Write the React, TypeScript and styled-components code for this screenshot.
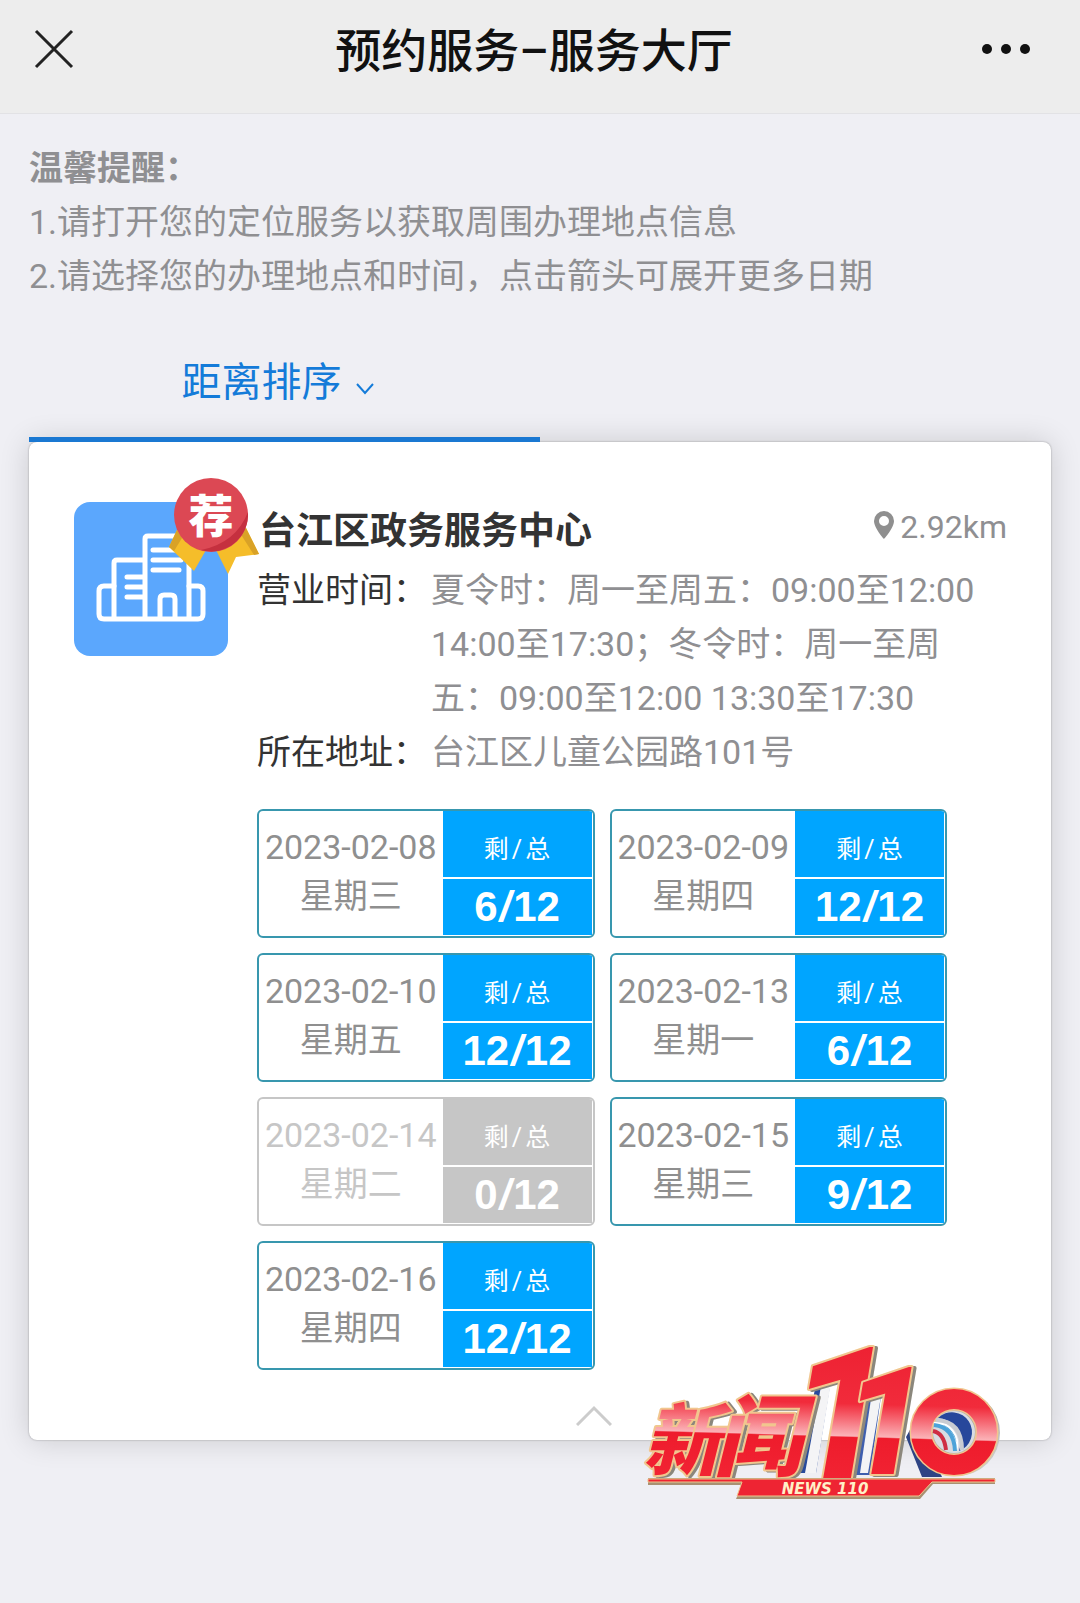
import React from "react";
import styled, { createGlobalStyle } from "styled-components";

const GlobalStyle = createGlobalStyle`
  * { box-sizing: border-box; }
  body {
    margin: 0;
    background: #efeff4;
    font-family: Roboto, "Noto Sans CJK SC", sans-serif;
    color: #8f8f92;
  }
  h1, h2, p, dl, dt, dd, ul { margin: 0; padding: 0; }
  button { font: inherit; color: inherit; background: none; border: 0; padding: 0; cursor: pointer; }
`;

const Page = styled.div`
  min-height: 100vh;
  padding-bottom: 162px;
`;

const Header = styled.header`
  display: grid;
  grid-template-columns: 1fr auto 1fr;
  align-items: center;
  padding: 0 46px 16px 34px;
  height: 114px;
  background: #ededed;
  border-bottom: 1px solid #e2e2e5;
`;

const HeaderTitle = styled.h1`
  padding-top: 4px;
  font-size: 46px;
  line-height: 60px;
  font-weight: 500;
  color: #111;
`;

const HeaderButton = styled.button<{ $side: "start" | "end" }>`
  justify-self: ${(p) => p.$side};
  display: flex;
`;

const Main = styled.main`
  padding: 27px 29px 0;
`;

const Notice = styled.section`
  font-size: 34px;
  line-height: 54px;
`;

const NoticeTitle = styled.h2`
  font-size: inherit;
  font-weight: 700;
`;

const SortBar = styled.nav`
  position: relative;
  z-index: 1;
  display: flex;
  padding-top: 19px;
`;

const SortTab = styled.button`
  display: flex;
  flex: 0 0 50%;
  align-items: center;
  justify-content: center;
  gap: 14px;
  height: 120px;
  padding: 6px 14px 0 0;
  border-bottom: 5px solid #1a78d2;
  color: #147bd9;
  font-size: 40px;
  line-height: 54px;

  svg { margin-top: 12px; }
`;

const Card = styled.article`
  position: relative;
  display: flex;
  align-items: flex-start;
  gap: 29px;
  padding: 60px 44px 0 45px;
  background: #fff;
  border-radius: 8px;
  box-shadow: 0 0 2px rgba(0, 0, 0, 0.35), 0 0 30px rgba(0, 0, 0, 0.16);
`;

const Tile = styled.div`
  position: relative;
  flex: none;
  display: flex;
  width: 154px;
  height: 154px;
  border-radius: 16px;
  background: #5ba7fd;
`;

const Ribbon = styled.svg`
  position: absolute;
  top: -26px;
  right: -32px;
`;

const Content = styled.div`
  flex: 1;
  min-width: 0;
`;

const TitleRow = styled.div`
  display: flex;
  align-items: flex-start;
  justify-content: space-between;
  margin-bottom: 1px;
`;

const CenterName = styled.h2`
  padding-left: 2px;
  font-size: 37px;
  line-height: 60px;
  font-weight: 700;
  color: #333;
`;

const Distance = styled.span`
  display: flex;
  align-items: center;
  gap: 6px;
  font-size: 32px;
  line-height: 50px;

  svg { margin-bottom: 4px; }
`;

const Details = styled.dl`
  display: grid;
  grid-template-columns: 174px 1fr;
  padding-right: 16px;
  font-size: 34px;
  line-height: 54px;
`;

const Term = styled.dt`
  color: #333;
`;

const Value = styled.dd``;

const Slots = styled.ul`
  display: grid;
  grid-template-columns: repeat(2, 1fr);
  gap: 15px;
  padding: 30px 60px 0 0;
  list-style: none;
`;

const SlotButton = styled.button`
  display: flex;
  width: 100%;
  height: 129px;
  border: 2px solid #3897ae;
  border-radius: 6px;
  overflow: hidden;
  background: #fff;
  color: #8f8f8f;

  &:disabled {
    border-color: #c6c6c6;
    color: #c6c6c6;
    cursor: default;
  }
`;

const SlotDate = styled.span`
  flex: 1;
  display: flex;
  flex-direction: column;
  justify-content: center;
  align-items: center;
  align-self: stretch;
  padding-bottom: 4px;
  font-size: 34px;
  line-height: 49px;
`;

const Quota = styled.span<{ $full: boolean }>`
  display: grid;
  grid-template-rows: 66px 56px;
  gap: 2px;
  flex: none;
  width: 149px;
  margin: 0 1px 1px 0;
  color: #fff;

  > span {
    display: flex;
    align-items: center;
    justify-content: center;
    background: ${(p) => (p.$full ? "#c6c6c6" : "#00a5ff")};
  }
`;

const QuotaLabel = styled.span`
  padding-top: 12px;
  font-size: 25px;
  line-height: 36px;
  i { font-style: normal; margin: 0 3px; }
`;

const QuotaCount = styled.span`
  font-family: "Liberation Sans", sans-serif;
  font-size: 42px;
  line-height: 54px;
  font-weight: 700;
  i { font-style: italic; margin: 0 2px; }
`;

const Collapse = styled.button`
  display: flex;
  justify-content: center;
  width: 100%;
  padding: 35px 76px 14px 0;
`;

const Logo = styled.svg`
  position: absolute;
  right: 21px;
  bottom: -79px;
  overflow: visible;
`;

const Raised = styled.g`
  filter: drop-shadow(3px 1px 0 #8b877c);
`;

interface Slot {
  date: string;
  day: string;
  left: number;
}

const TOTAL = 12;

const slots: Slot[] = [
  { date: "2023-02-08", day: "星期三", left: 6 },
  { date: "2023-02-09", day: "星期四", left: 12 },
  { date: "2023-02-10", day: "星期五", left: 12 },
  { date: "2023-02-13", day: "星期一", left: 6 },
  { date: "2023-02-14", day: "星期二", left: 0 },
  { date: "2023-02-15", day: "星期三", left: 9 },
  { date: "2023-02-16", day: "星期四", left: 12 },
];

function SlotItem({ date, day, left }: Slot) {
  return (
    <li>
      <SlotButton disabled={left === 0}>
        <SlotDate>
          <span>{date}</span>
          <span>{day}</span>
        </SlotDate>
        <Quota $full={left === 0}>
          <QuotaLabel>剩<i>/</i>总</QuotaLabel>
          <QuotaCount>{left}<i>/</i>{TOTAL}</QuotaCount>
        </Quota>
      </SlotButton>
    </li>
  );
}

function BuildingIcon() {
  return (
    <svg width="154" height="154" viewBox="0 0 154 154" fill="none" stroke="#fff" strokeWidth="5" strokeLinejoin="round" strokeLinecap="round">
      <path d="M40 84H30q-5 0-5 5v23q0 5 5 5h94q5 0 5-5V89q0-5-5-5h-9" />
      <path d="M40 116V61q0-3 3-3h26" />
      <path d="M71 116V37q0-3 3-3h38q3 0 3 3v79" />
      <path d="M79 48h28M79 58h28M79 68h26M53 75h16M53 85h16M53 95h16" />
      <path d="M86 116V97q0-4 4-4h7q4 0 4 4v19" />
    </svg>
  );
}

function RecommendBadge() {
  return (
    <Ribbon width="92" height="102" viewBox="0 0 92 102">
      <path d="M9 54L1 71L26 95L38 74L28 60Z" fill="#f5bd2a" />
      <path d="M9 54L1 71L6 75L14 62Z" fill="#d9a227" />
      <path d="M48 74L60 98L68 81L91 78L78 52Z" fill="#f5bd2a" />
      <path d="M78 52L91 78L86 79L72 57Z" fill="#d9a227" />
      <circle cx="43" cy="39" r="37" fill="#dc4854" />
      <path d="M33 74Q68 67 80 36A37 37 0 0 1 33 74Z" fill="#c5303f" />
      <text x="43" y="57" textAnchor="middle" fontSize="45" fontWeight="900" fill="#fff" fontFamily="'Noto Sans CJK SC', sans-serif">荐</text>
    </Ribbon>
  );
}

function NewsLogo() {
  return (
    <Logo width="400" height="200" viewBox="0 0 400 200" role="img" aria-label="新闻110">
      <defs>
        <linearGradient id="gloss" gradientUnits="userSpaceOnUse" x1="200" y1="30" x2="196" y2="165">
          <stop offset="0" stopColor="#ee2233" />
          <stop offset="0.4" stopColor="#f12b3b" />
          <stop offset="0.64" stopColor="#fbb3b8" />
          <stop offset="0.65" stopColor="#ee1c2c" />
          <stop offset="1" stopColor="#f22434" />
        </linearGradient>
        <linearGradient id="steel" x1="0" y1="0" x2="1" y2="1">
          <stop offset="0" stopColor="#f2f2f2" />
          <stop offset="0.5" stopColor="#a3a39e" />
          <stop offset="1" stopColor="#dcdcda" />
        </linearGradient>
      </defs>
      <path d="M187 58L202 54L186 154H170Z" fill="#284a9c" />
      <path d="M192 62L202 58L186 154H175Z" fill="#f4f4f6" />
      <path d="M239 74L252 70L240 156H224Z" fill="#3f5fae" />
      <path d="M241 80L251 77L238 154H230Z" fill="#f4f4f6" />
      <path d="M276 118L292 158H312L286 100Z" fill="#2e4484" />
      <Raised fontWeight="900" fontStyle="italic" strokeLinejoin="round" paintOrder="stroke" fill="url(#gloss)" stroke="#f1c68e" strokeWidth="4">
        <text y="150" fontFamily="'Noto Sans CJK SC', sans-serif">
          <tspan x="13" fontSize="78">新</tspan>
          <tspan x="84" fontSize="88">闻</tspan>
        </text>
        <text fontFamily="Roboto, sans-serif" fontWeight="800">
          <tspan x="158" y="160" fontSize="186">1</tspan>
          <tspan x="213" y="155" fontSize="150">1</tspan>
        </text>
      </Raised>
      <circle cx="327" cy="114" r="43" fill="url(#steel)" />
      <circle cx="324" cy="113" r="33" fill="none" stroke="#f1c68e" strokeWidth="23" />
      <circle cx="324" cy="113" r="33" fill="none" stroke="url(#gloss)" strokeWidth="20" />
      <circle cx="324" cy="113" r="21" fill="#d9dce2" />
      <path d="M308 99A20 20 0 1 1 329 132A24 24 0 0 0 308 99Z" fill="#27479b" />
      <path d="M304 104A21 21 0 0 1 326 132A26 26 0 0 0 304 104Z" fill="#4da3d9" stroke="#fff" strokeWidth="2" />
      <path d="M306 101Q332 102 332 131" fill="none" stroke="#c9ccd2" strokeWidth="4" />
      <path d="M304 106Q324 108 325 132" fill="none" stroke="#4da3d9" strokeWidth="4" />
      <path d="M303 112Q314 114 316 131" fill="none" stroke="#cf2e43" strokeWidth="4" />
      <path d="M18 159H365V165H303L290 180H106L112 166H18Z" fill="#a99172" />
      <path d="M18 160H365V163H302L289 177H107L112 163H18Z" fill="#ee2433" stroke="#f1c68e" strokeWidth="1" />
      <text x="195" y="175" textAnchor="middle" fontFamily="'DejaVu Sans', sans-serif" fontSize="15" fontWeight="700" fontStyle="italic" fill="#fff0c8">NEWS 110</text>
    </Logo>
  );
}

export default function App() {
  return (
    <>
      <GlobalStyle />
      <Page>
        <Header>
          <HeaderButton $side="start" aria-label="关闭">
            <svg width="40" height="40" viewBox="0 0 40 40" stroke="#222" strokeWidth="3">
              <path d="M2 2L38 38M38 2L2 38" />
            </svg>
          </HeaderButton>
          <HeaderTitle>预约服务–服务大厅</HeaderTitle>
          <HeaderButton $side="end" aria-label="更多">
            <svg width="52" height="12" viewBox="0 0 52 12" fill="#111">
              <circle cx="5" cy="6" r="5" />
              <circle cx="24" cy="6" r="5" />
              <circle cx="43" cy="6" r="5" />
            </svg>
          </HeaderButton>
        </Header>
        <Main>
          <Notice>
            <NoticeTitle>温馨提醒：</NoticeTitle>
            <p>1.请打开您的定位服务以获取周围办理地点信息</p>
            <p>2.请选择您的办理地点和时间，点击箭头可展开更多日期</p>
          </Notice>
          <SortBar>
            <SortTab>
              距离排序
              <svg width="18" height="12" viewBox="0 0 18 12" fill="none" stroke="#147bd9" strokeWidth="2">
                <path d="M1 1L9 10L17 1" />
              </svg>
            </SortTab>
          </SortBar>
          <Card>
            <Tile>
              <BuildingIcon />
              <RecommendBadge />
            </Tile>
            <Content>
              <TitleRow>
                <CenterName>台江区政务服务中心</CenterName>
                <Distance>
                  <svg width="20" height="28" viewBox="0 0 20 28" fill="#8f8f8f" fillRule="evenodd">
                    <path d="M10 0A10 10 0 0 0 0 10C0 17 10 28 10 28S20 17 20 10A10 10 0 0 0 10 0ZM10 5a5 5 0 1 1 0 10a5 5 0 0 1 0-10Z" />
                  </svg>
                  2.92km
                </Distance>
              </TitleRow>
              <Details>
                <Term>营业时间：</Term>
                <Value>夏令时：周一至周五：09:00至12:00 14:00至17:30；冬令时：周一至周五：09:00至12:00 13:30至17:30</Value>
                <Term>所在地址：</Term>
                <Value>台江区儿童公园路101号</Value>
              </Details>
              <Slots>
                {slots.map((slot) => (
                  <SlotItem key={slot.date} {...slot} />
                ))}
              </Slots>
              <Collapse aria-label="收起">
                <svg width="36" height="21" viewBox="0 0 36 21" fill="none" stroke="#ccc" strokeWidth="3">
                  <path d="M1 20L18 3L35 20" />
                </svg>
              </Collapse>
            </Content>
            <NewsLogo />
          </Card>
        </Main>
      </Page>
    </>
  );
}
